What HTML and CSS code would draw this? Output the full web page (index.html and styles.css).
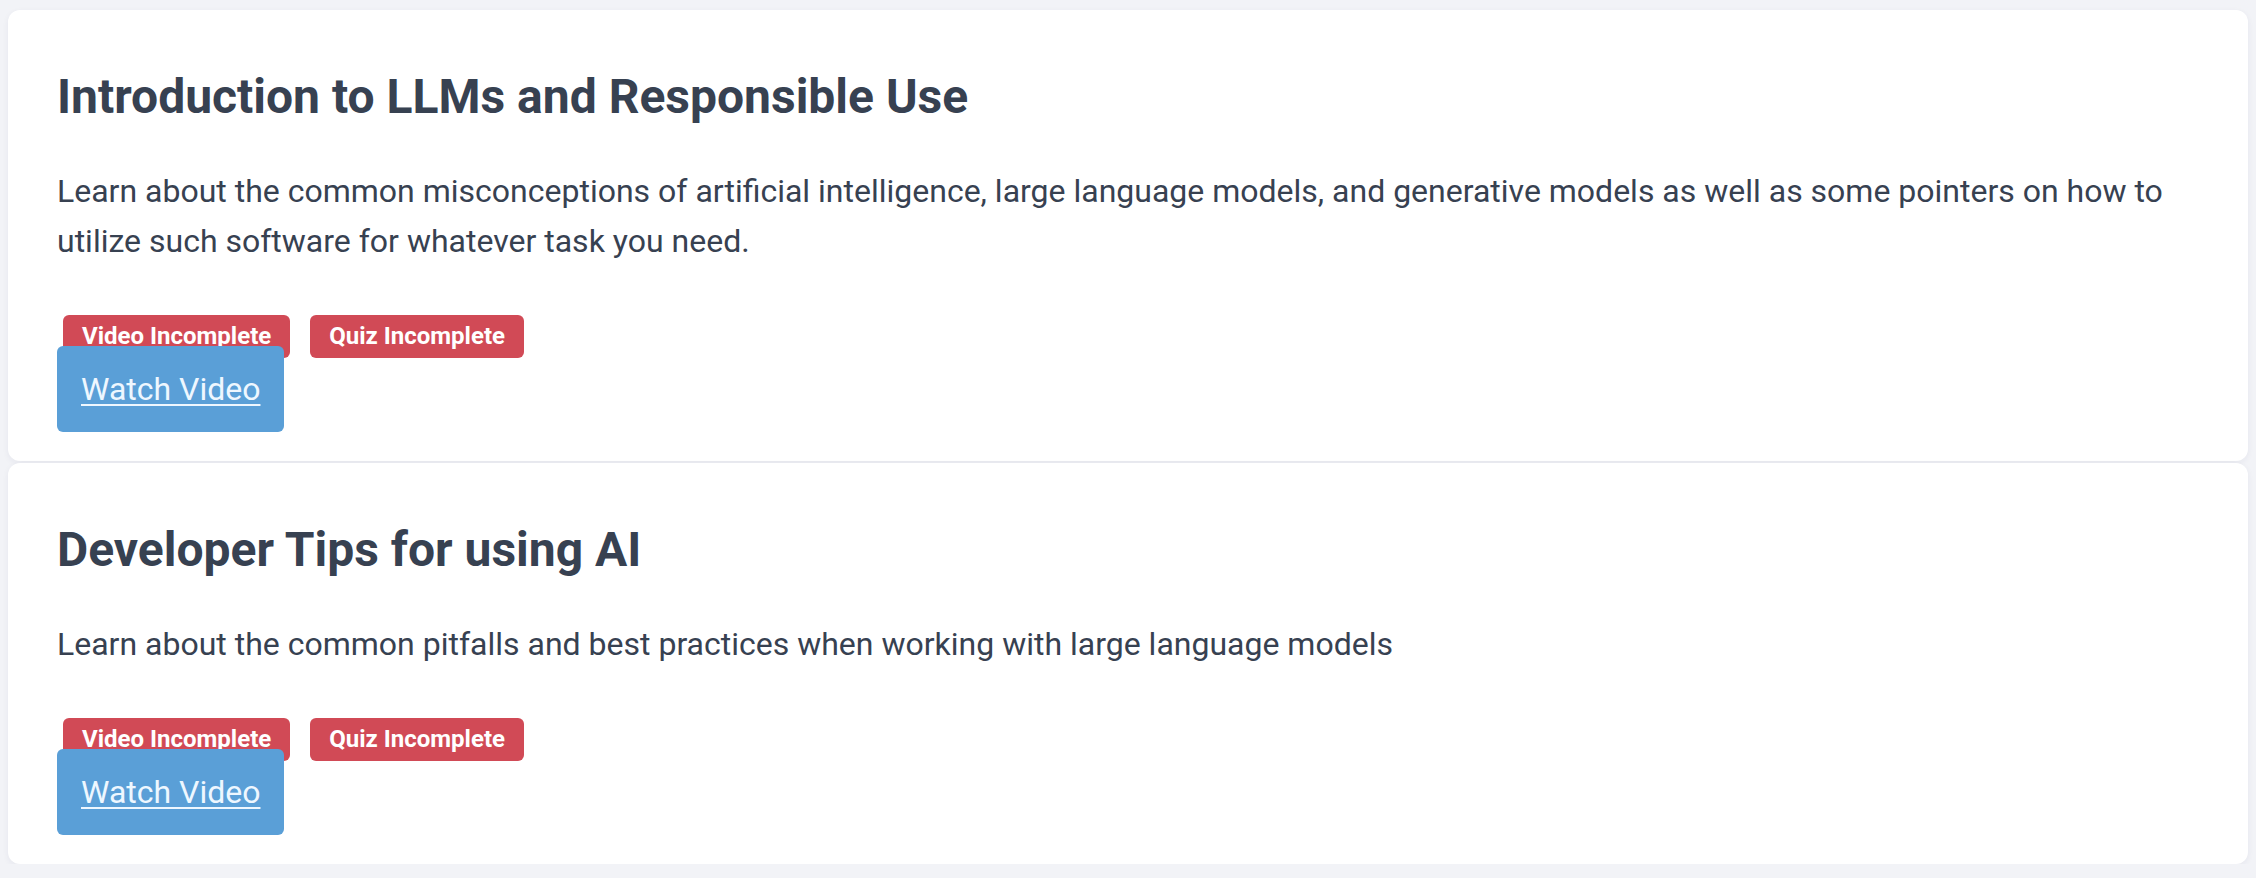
FILE: index.html
```html
<!DOCTYPE html>
<html lang="en">
<head>
<meta charset="utf-8">
<title>Modules</title>
<link rel="stylesheet" href="styles.css">
</head>
<body>
<main class="list">
  <section class="card">
    <h2 class="card-title">Introduction to LLMs and Responsible Use</h2>
    <p class="card-desc">Learn about the common misconceptions of artificial intelligence, large language models, and generative models as well as some pointers on how to utilize such software for whatever task you need.</p>
    <div class="badges">
      <span class="badge">Video Incomplete</span>
      <span class="badge">Quiz Incomplete</span>
    </div>
    <div class="actions"><a class="btn" href="#">Watch Video</a></div>
  </section>
  <section class="card">
    <h2 class="card-title">Developer Tips for using AI</h2>
    <p class="card-desc">Learn about the common pitfalls and best practices when working with large language models</p>
    <div class="badges">
      <span class="badge">Video Incomplete</span>
      <span class="badge">Quiz Incomplete</span>
    </div>
    <div class="actions"><a class="btn" href="#">Watch Video</a></div>
  </section>
</main>
</body>
</html>
```
FILE: styles.css
```css
html, body {
  margin: 0;
  padding: 0;
}
body {
  background: #f2f3f7;
  font-family: Roboto, "Liberation Sans", sans-serif;
  color: #374151;
  padding: 10px 8px 0 8px;
}
.list {
  display: flex;
  flex-direction: column;
  gap: 2px;
}
.card {
  background: #ffffff;
  border-radius: 12px;
  box-shadow: 0 2px 6px rgba(30, 40, 80, 0.06);
  padding: 59px 49px 29px 49px;
}
.card-title {
  margin: 0;
  font-size: 48px;
  line-height: 56px;
  font-weight: 700;
  color: #374151;
}
.card-desc {
  margin: 41px 0 0 0;
  font-size: 32px;
  line-height: 50px;
  color: #374151;
}
.badges {
  display: flex;
  gap: 20px;
  margin: 49px 0 0 6px;
}
.badge {
  display: inline-block;
  background: #d14a56;
  color: #ffffff;
  font-weight: 700;
  font-size: 24px;
  line-height: 43px;
  height: 43px;
  padding: 0 19px;
  border-radius: 6px;
}
.actions {
  display: flex;
  margin-top: -12px;
  position: relative;
}
.btn {
  display: inline-block;
  background: #5a9fd7;
  color: #eef7ff;
  font-size: 32px;
  padding: 24px 24px;
  border-radius: 6px;
  text-decoration: underline;
  text-underline-offset: 4px;
  text-decoration-thickness: 2px;
}
```
